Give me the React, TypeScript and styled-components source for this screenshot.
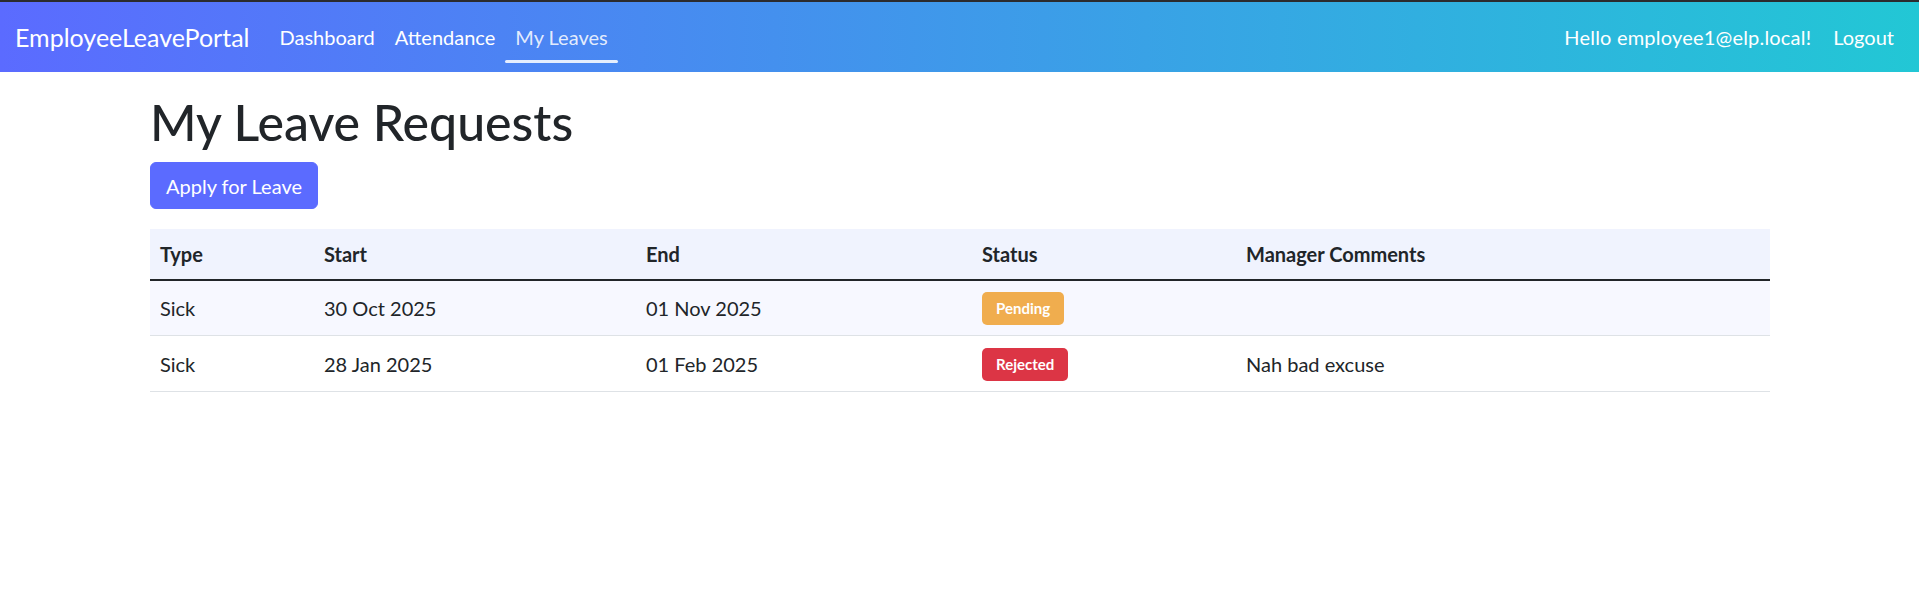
import { createGlobalStyle } from "styled-components";
import styled from "styled-components";

const FONT = `Lato, "Open Sans", sans-serif`;

const GlobalStyle = createGlobalStyle`
  html, body {
    margin: 0;
    padding: 0;
    background: #fff;
  }
  body {
    font-family: ${FONT};
    font-size: 20px;
    color: #212529;
  }
  * {
    box-sizing: border-box;
  }
`;

const NavBar = styled.header`
  height: 72px;
  border-top: 2px solid #2b2b2e;
  background: linear-gradient(90deg, #5b6bff 0%, #22c7d5 100%);
  display: flex;
  align-items: center;
  justify-content: space-between;
  padding: 0 15px;
  color: #fff;
`;

const NavLeft = styled.div`
  display: flex;
  align-items: center;
`;

const Brand = styled.a`
  font-size: 25px;
  line-height: 36px;
  color: #fff;
  text-decoration: none;
  margin-right: 20px;
`;

const NavList = styled.nav`
  display: flex;
  align-items: center;
`;

const NavLink = styled.a<{ $active?: boolean }>`
  position: relative;
  display: block;
  padding: 10px 10px;
  font-size: 20px;
  line-height: 30px;
  text-decoration: none;
  color: ${({ $active }) => ($active ? "rgba(255,255,255,0.86)" : "#fff")};

  &::after {
    content: "";
    display: ${({ $active }) => ($active ? "block" : "none")};
    position: absolute;
    left: 0;
    right: 0;
    bottom: -1px;
    height: 3px;
    border-radius: 2px;
    background: rgba(255, 255, 255, 0.86);
  }
`;

const NavRight = styled.div`
  display: flex;
  align-items: center;
  font-size: 20px;
`;

const Greeting = styled.span`
  padding: 10px 12px 10px 10px;
  line-height: 30px;
  letter-spacing: 0.2px;
`;

const Container = styled.main`
  width: 1620px;
  margin: 20px auto 0 150px;
`;

const Title = styled.h1`
  font-size: 50px;
  font-weight: 500;
  line-height: 60px;
  margin: 0 0 10px;
  color: #212529;
`;

const PrimaryButton = styled.button`
  font-family: ${FONT};
  font-size: 20px;
  line-height: 30px;
  padding: 7.5px 15px;
  border: 1px solid #5b6bff;
  border-radius: 6px;
  background: #5b6bff;
  color: #fff;
  cursor: pointer;
`;

const Table = styled.table`
  margin-top: 20px;
  width: 100%;
  border-collapse: collapse;
  table-layout: fixed;
`;

const HeadRow = styled.tr`
  background: #f0f3fe;
  border-bottom: 2px solid #212529;
`;

const Th = styled.th`
  text-align: left;
  font-weight: 700;
  padding: 10px;
  line-height: 30px;
`;

const Row = styled.tr<{ $striped?: boolean }>`
  background: ${({ $striped }) => ($striped ? "#f7f8ff" : "#fff")};
  border-bottom: 1px solid #dee2e6;
`;

const Td = styled.td`
  padding: 10px;
  line-height: 30px;
  vertical-align: middle;
`;

const Badge = styled.span<{ $tone: string }>`
  display: inline-block;
  font-size: 15px;
  font-weight: 700;
  line-height: 15px;
  padding: 9px 14px;
  border-radius: 5px;
  color: #fff;
  background: ${({ $tone }) => $tone};
  vertical-align: middle;
`;

const columns = [
  { label: "Type", width: 164 },
  { label: "Start", width: 322 },
  { label: "End", width: 336 },
  { label: "Status", width: 264 },
  { label: "Manager Comments", width: 534 },
];

const STATUS_COLORS: Record<string, string> = {
  Pending: "#f0ad4e",
  Rejected: "#dc3545",
  Approved: "#198754",
};

const leaves = [
  { type: "Sick", start: "30 Oct 2025", end: "01 Nov 2025", status: "Pending", comments: "" },
  { type: "Sick", start: "28 Jan 2025", end: "01 Feb 2025", status: "Rejected", comments: "Nah bad excuse" },
];

export default function App() {
  return (
    <>
      <GlobalStyle />
      <NavBar>
        <NavLeft>
          <Brand href="#">EmployeeLeavePortal</Brand>
          <NavList>
            <NavLink href="#">Dashboard</NavLink>
            <NavLink href="#">Attendance</NavLink>
            <NavLink href="#" $active>
              My Leaves
            </NavLink>
          </NavList>
        </NavLeft>
        <NavRight>
          <Greeting>Hello employee1@elp.local!</Greeting>
          <NavLink href="#">Logout</NavLink>
        </NavRight>
      </NavBar>

      <Container>
        <Title>My Leave Requests</Title>
        <PrimaryButton>Apply for Leave</PrimaryButton>

        <Table>
          <colgroup>
            {columns.map(c => (
              <col key={c.label} style={{ width: c.width }} />
            ))}
          </colgroup>
          <thead>
            <HeadRow>
              {columns.map(c => (
                <Th key={c.label}>{c.label}</Th>
              ))}
            </HeadRow>
          </thead>
          <tbody>
            {leaves.map((l, i) => (
              <Row key={i} $striped={i % 2 === 0}>
                <Td>{l.type}</Td>
                <Td>{l.start}</Td>
                <Td>{l.end}</Td>
                <Td>
                  <Badge $tone={STATUS_COLORS[l.status]}>{l.status}</Badge>
                </Td>
                <Td>{l.comments}</Td>
              </Row>
            ))}
          </tbody>
        </Table>
      </Container>
    </>
  );
}
